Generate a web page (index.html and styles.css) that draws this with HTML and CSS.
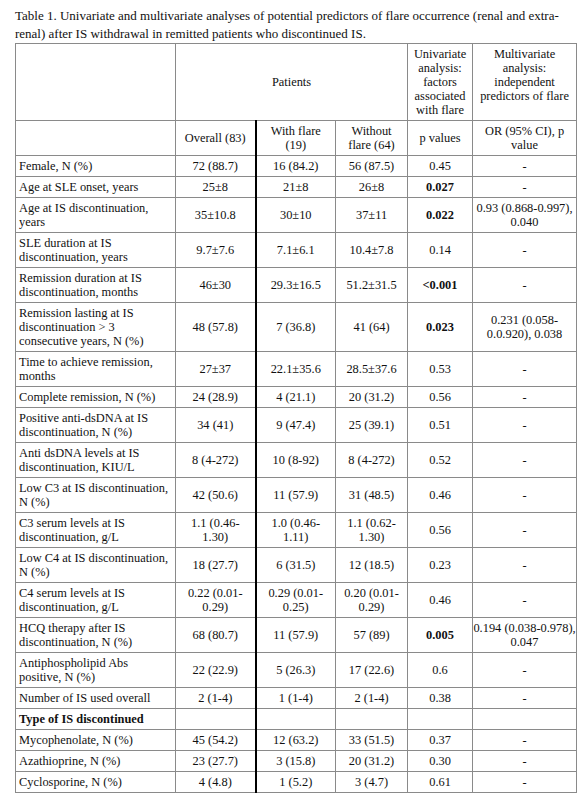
FILE: index.html
```html
<!DOCTYPE html>
<html lang="en">
<head>
<meta charset="utf-8">
<title>Table 1</title>
<link rel="stylesheet" href="styles.css">
</head>
<body>
<div class="page">
  <p class="caption">Table 1. Univariate and multivariate analyses of potential predictors of flare occurrence (renal and extra-<br>renal) after IS withdrawal in remitted patients who discontinued IS.</p>
  <table class="data">
    <colgroup>
      <col class="c-label">
      <col class="c-overall">
      <col class="c-flare">
      <col class="c-noflare">
      <col class="c-uni">
      <col class="c-multi">
    </colgroup>
    <thead>
      <tr class="h1">
        <th></th>
        <th colspan="3">Patients</th>
        <th>Univariate<br>analysis:<br>factors<br>associated<br>with flare</th>
        <th class="top">Multivariate<br>analysis:<br>independent<br>predictors of flare</th>
      </tr>
      <tr>
        <th></th>
        <th>Overall (83)</th>
        <th class="wf">With flare<br>(19)</th>
        <th>Without<br>flare (64)</th>
        <th>p values</th>
        <th>OR (95% CI), p<br>value</th>
      </tr>
    </thead>
    <tbody>
      <tr><td class="lbl">Female, N (%)</td><td>72 (88.7)</td><td class="wf">16 (84.2)</td><td>56 (87.5)</td><td>0.45</td><td>-</td></tr>
      <tr><td class="lbl">Age at SLE onset, years</td><td>25±8</td><td class="wf">21±8</td><td>26±8</td><td class="b">0.027</td><td>-</td></tr>
      <tr><td class="lbl">Age at IS discontinuation, years</td><td>35±10.8</td><td class="wf">30±10</td><td>37±11</td><td class="b">0.022</td><td>0.93 (0.868-0.997),<br>0.040</td></tr>
      <tr><td class="lbl">SLE duration at IS discontinuation, years</td><td>9.7±7.6</td><td class="wf">7.1±6.1</td><td>10.4±7.8</td><td>0.14</td><td>-</td></tr>
      <tr><td class="lbl">Remission duration at IS discontinuation, months</td><td>46±30</td><td class="wf">29.3±16.5</td><td>51.2±31.5</td><td class="b">&lt;0.001</td><td>-</td></tr>
      <tr><td class="lbl">Remission lasting at IS discontinuation &gt; 3 consecutive years, N (%)</td><td>48 (57.8)</td><td class="wf">7 (36.8)</td><td>41 (64)</td><td class="b">0.023</td><td>0.231 (0.058-<br>0.0.920), 0.038</td></tr>
      <tr><td class="lbl">Time to achieve remission, months</td><td>27±37</td><td class="wf">22.1±35.6</td><td>28.5±37.6</td><td>0.53</td><td>-</td></tr>
      <tr><td class="lbl">Complete remission, N (%)</td><td>24 (28.9)</td><td class="wf">4 (21.1)</td><td>20 (31.2)</td><td>0.56</td><td>-</td></tr>
      <tr><td class="lbl">Positive anti-dsDNA at IS discontinuation, N (%)</td><td>34 (41)</td><td class="wf">9 (47.4)</td><td>25 (39.1)</td><td>0.51</td><td>-</td></tr>
      <tr><td class="lbl">Anti dsDNA levels at IS discontinuation, KIU/L</td><td>8 (4-272)</td><td class="wf">10 (8-92)</td><td>8 (4-272)</td><td>0.52</td><td>-</td></tr>
      <tr><td class="lbl">Low C3 at IS discontinuation, N (%)</td><td>42 (50.6)</td><td class="wf">11 (57.9)</td><td>31 (48.5)</td><td>0.46</td><td>-</td></tr>
      <tr><td class="lbl">C3 serum levels at IS discontinuation, g/L</td><td>1.1 (0.46-<br>1.30)</td><td class="wf">1.0 (0.46-<br>1.11)</td><td>1.1 (0.62-<br>1.30)</td><td>0.56</td><td>-</td></tr>
      <tr><td class="lbl">Low C4 at IS discontinuation, N (%)</td><td>18 (27.7)</td><td class="wf">6 (31.5)</td><td>12 (18.5)</td><td>0.23</td><td>-</td></tr>
      <tr><td class="lbl">C4 serum levels at IS discontinuation, g/L</td><td>0.22 (0.01-<br>0.29)</td><td class="wf">0.29 (0.01-<br>0.25)</td><td>0.20 (0.01-<br>0.29)</td><td>0.46</td><td>-</td></tr>
      <tr><td class="lbl">HCQ therapy after IS discontinuation, N (%)</td><td>68 (80.7)</td><td class="wf">11 (57.9)</td><td>57 (89)</td><td class="b">0.005</td><td class="tight">0.194 (0.038-0.978),<br>0.047</td></tr>
      <tr><td class="lbl">Antiphospholipid Abs positive, N (%)</td><td>22 (22.9)</td><td class="wf">5 (26.3)</td><td>17 (22.6)</td><td>0.6</td><td>-</td></tr>
      <tr><td class="lbl">Number of IS used overall</td><td>2 (1-4)</td><td class="wf">1 (1-4)</td><td>2 (1-4)</td><td>0.38</td><td>-</td></tr>
      <tr><td class="lbl b">Type of IS discontinued</td><td></td><td class="wf"></td><td></td><td></td><td></td></tr>
      <tr><td class="lbl">Mycophenolate, N (%)</td><td>45 (54.2)</td><td class="wf">12 (63.2)</td><td>33 (51.5)</td><td>0.37</td><td>-</td></tr>
      <tr><td class="lbl">Azathioprine, N (%)</td><td>23 (27.7)</td><td class="wf">3 (15.8)</td><td>20 (31.2)</td><td>0.30</td><td>-</td></tr>
      <tr><td class="lbl">Cyclosporine, N (%)</td><td>4 (4.8)</td><td class="wf">1 (5.2)</td><td>3 (4.7)</td><td>0.61</td><td>-</td></tr>
    </tbody>
  </table>
</div>
</body>
</html>
```
FILE: styles.css
```css
html, body {
  margin: 0;
  padding: 0;
  background: #ffffff;
}

body {
  font-family: "Liberation Serif", "Times New Roman", serif;
  color: #111111;
}

.page {
  padding: 7px 8px 0 15px;
}

.caption {
  margin: 0 0 1px 0;
  font-size: 13px;
  line-height: 17.5px;
}

.data {
  border-collapse: collapse;
  table-layout: fixed;
  width: 561px;
  font-size: 12.4px;
  line-height: 14px;
}

.c-label { width: 160px; }
.c-overall { width: 80px; }
.c-flare { width: 80px; }
.c-noflare { width: 72px; }
.c-uni { width: 65px; }
.c-multi { width: 104px; }

.data th,
.data td {
  border: 1px solid #8a8a8a;
  padding: 3px 3px;
  text-align: center;
  vertical-align: middle;
  font-weight: normal;
}

.data .lbl {
  text-align: left;
}

.data .top {
  vertical-align: top;
}

.data .wf {
  border-left: 2px solid #000000;
}

.data .b {
  font-weight: bold;
}

.data .tight {
  padding-left: 0;
  padding-right: 0;
  white-space: nowrap;
}
```
